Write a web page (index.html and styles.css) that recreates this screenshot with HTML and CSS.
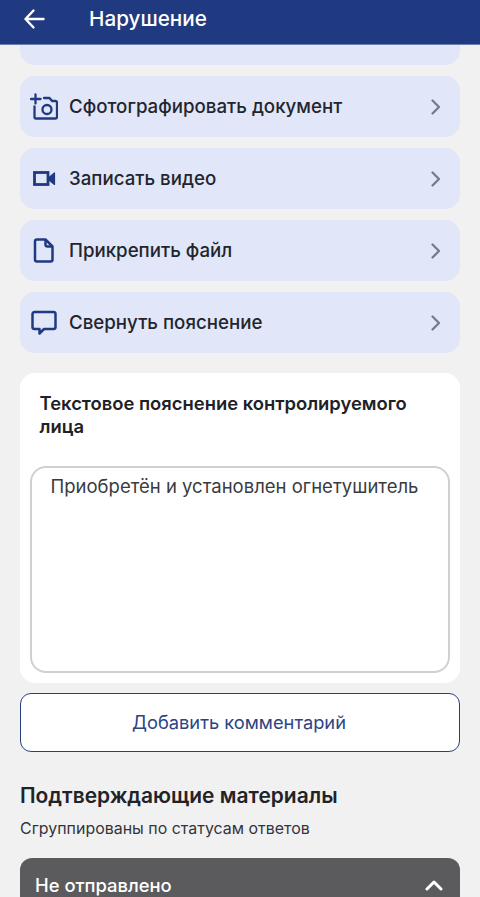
FILE: index.html
```html
<!DOCTYPE html>
<html lang="ru">
<head>
<meta charset="utf-8">
<title>Нарушение</title>
<link rel="stylesheet" href="styles.css">
</head>
<body>
<div class="screen">
  <header class="topbar">
    <svg class="back" width="24" height="24" viewBox="0 0 24 24" fill="none" stroke="#fff" stroke-width="2.400" stroke-linecap="round" stroke-linejoin="round"><path d="M21.500 12H3.500M11.500 3.500L3.500 12L11.500 20.500"/></svg>
    <h1 class="title">Нарушение</h1>
  </header>
  <main class="content">
    <div class="row row-cut"></div>
    <div class="row">
      <svg class="icon" width="28" height="28" viewBox="0 0 28 28" fill="none" stroke="#203a82" stroke-width="2.300" stroke-linecap="round" stroke-linejoin="round"><path d="M1 6H10.500M5.500 1.500V10.500"/><path d="M4.500 13.500V24A1.500 1.500 0 0 0 6 25.500H25.500A1.500 1.500 0 0 0 27 24V9.500A1.500 1.500 0 0 0 25.500 8H22L19.500 5H14"/><circle cx="17" cy="16.500" r="4.500"/></svg>
      <span class="label">Сфотографировать документ</span>
      <svg class="chev" width="12" height="18" viewBox="0 0 12 18" fill="none" stroke="#767b8c" stroke-width="2.300" stroke-linecap="round" stroke-linejoin="round"><path d="M2.500 2.500L9 9L2.500 15.500"/></svg>
    </div>
    <div class="row">
      <svg class="icon" width="28" height="28" viewBox="0 0 28 28" fill="none"><rect x="4.500" y="7.500" width="13.500" height="12" stroke="#203a82" stroke-width="2.800"/><path d="M19 12.500L24.500 8V19.500L19 15Z" fill="#203a82" stroke="#203a82" stroke-width="1.200" stroke-linejoin="round"/></svg>
      <span class="label">Записать видео</span>
      <svg class="chev" width="12" height="18" viewBox="0 0 12 18" fill="none" stroke="#767b8c" stroke-width="2.300" stroke-linecap="round" stroke-linejoin="round"><path d="M2.500 2.500L9 9L2.500 15.500"/></svg>
    </div>
    <div class="row">
      <svg class="icon" width="28" height="28" viewBox="0 0 28 28" fill="none" stroke="#203a82" stroke-width="2.500" stroke-linejoin="round"><path d="M7 2.500H15.500L22.500 9.500V22.500A2 2 0 0 1 20.500 24.500H7A2 2 0 0 1 5 22.500V4.500A2 2 0 0 1 7 2.500Z"/><path d="M15.500 2.500V7.500A2 2 0 0 0 17.500 9.500H22.500"/></svg>
      <span class="label">Прикрепить файл</span>
      <svg class="chev" width="12" height="18" viewBox="0 0 12 18" fill="none" stroke="#767b8c" stroke-width="2.300" stroke-linecap="round" stroke-linejoin="round"><path d="M2.500 2.500L9 9L2.500 15.500"/></svg>
    </div>
    <div class="row">
      <svg class="icon" width="28" height="28" viewBox="0 0 28 28" fill="none" stroke="#203a82" stroke-width="2.500" stroke-linejoin="round"><path d="M4.500 3H23.500A2 2 0 0 1 25.500 5V18A2 2 0 0 1 23.500 20H14L9.500 24.500V20H4.500A2 2 0 0 1 2.500 18V5A2 2 0 0 1 4.500 3Z"/></svg>
      <span class="label">Свернуть пояснение</span>
      <svg class="chev" width="12" height="18" viewBox="0 0 12 18" fill="none" stroke="#767b8c" stroke-width="2.300" stroke-linecap="round" stroke-linejoin="round"><path d="M2.500 2.500L9 9L2.500 15.500"/></svg>
    </div>
    <section class="note">
      <h2 class="note-title">Текстовое пояснение контролируемого лица</h2>
      <div class="note-box">Приобретён и установлен огнетушитель</div>
    </section>
    <button class="add" type="button">Добавить комментарий</button>
    <h2 class="mat-title">Подтверждающие материалы</h2>
    <p class="mat-sub">Сгруппированы по статусам ответов</p>
    <div class="status">
      <span class="status-label">Не отправлено</span>
      <svg width="18" height="12" viewBox="0 0 18 12" fill="none" stroke="#fff" stroke-width="3" stroke-linecap="round" stroke-linejoin="round"><path d="M2 10L9 3L16 10"/></svg>
    </div>
  </main>
</div>
</body>
</html>
```
FILE: styles.css
```css
* { box-sizing: border-box; }
html, body { margin: 0; padding: 0; }
body {
  width: 480px;
  height: 897px;
  overflow: hidden;
  background: #f1f1f2;
  font-family: Inter, "Liberation Sans", sans-serif;
}
.screen { height: 897px; display: flex; flex-direction: column; overflow: hidden; }
.topbar {
  flex: none;
  height: 45px;
  background: #203a82;
  display: flex;
  align-items: center;
  padding: 0 21px 7px 22px;
  border-bottom: 1px solid #6d7fae;
}
.back { flex: none; }
.title { margin: 0 0 0 43px; color: #fff; font-size: 20.700px; line-height: 24px; font-weight: 500; }
.content { padding: 0 20px; display: flex; flex-direction: column; }
.row {
  height: 61px;
  margin-bottom: 11px;
  background: #e1e6f9;
  border-radius: 15px;
  display: flex;
  align-items: center;
  padding: 0 18px 0 10px;
}
.row-cut { height: 20px; margin-bottom: 11px; border-radius: 0 0 15px 15px; }
.icon { flex: none; }
.label { flex: 1; margin-left: 11px; font-size: 18.700px; line-height: 24px; font-weight: 500; color: #23252d; }
.chev { flex: none; }
.note {
  margin-top: 9px;
  height: 310px;
  background: #fff;
  border-radius: 15px;
  padding: 19px 10px 10px;
  display: flex;
  flex-direction: column;
}
.note-title { margin: 0 10px 0 9.500px; font-size: 18.400px; line-height: 23px; font-weight: 600; color: #202126; }
.note-box {
  margin-top: 28px;
  flex: 1;
  border: 2px solid #d0d0d2;
  border-radius: 16px;
  padding: 6px 18.500px;
  font-size: 18.500px;
  line-height: 24px;
  color: #3a3b40;
}
.add {
  margin-top: 10px;
  height: 59px;
  border: 1.500px solid #27407f;
  border-radius: 11px;
  background: #fff;
  font: 400 18.300px Inter, "Liberation Sans", sans-serif;
  color: #2b4484;
  padding: 0 2px 2px 0;
}
.mat-title { margin: 31px 0 0; font-size: 20.950px; line-height: 26px; font-weight: 600; color: #222327; }
.mat-sub { margin: 10px 0 0; font-size: 15.950px; line-height: 20px; color: #34353a; }
.status {
  margin-top: 19px;
  height: 60px;
  background: #5b5b5d;
  border-radius: 12px 12px 0 0;
  display: flex;
  justify-content: space-between;
  align-items: flex-start;
  padding: 15px 17px 0 15px;
}
.status-label { color: #fff; font-size: 18.400px; line-height: 24px; font-weight: 500; }
.status svg { margin-top: 6px; }
```
